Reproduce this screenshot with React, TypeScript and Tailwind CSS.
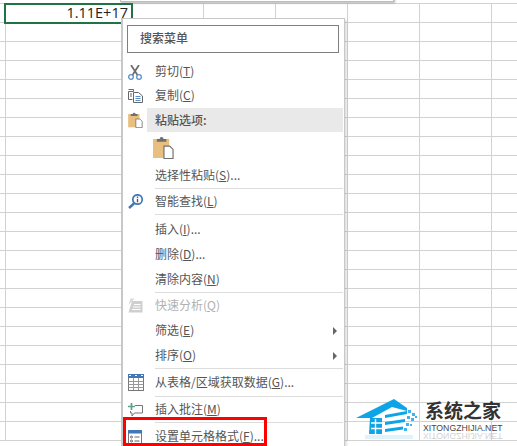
import React from 'react';

const CJK = "font-['Noto_Sans_CJK_SC','Noto_Sans',sans-serif]";

const rowCount = 23;
const colCount = 6;

const Sheet: React.FC = () => (
  <div className="pt-[3px]">
    <div className="border-t border-[#d2d2d2]">
      {Array.from({ length: rowCount }).map((_, r) => (
        <div key={r} className="flex h-[19px] border-b border-[#d2d2d2] box-border">
          <div className="w-[6px] shrink-0 border-r border-[#d2d2d2]" />
          <div className="w-[126px] shrink-0 border-r border-[#d2d2d2]" />
          {Array.from({ length: colCount }).map((_, c) => (
            <div key={c} className="w-[72px] shrink-0 border-r border-[#d2d2d2]" />
          ))}
        </div>
      ))}
    </div>
  </div>
);

const Clipboard: React.FC<{ className?: string }> = ({ className }) => (
  <svg viewBox="0 0 22 24" className={className}>
    <rect x="0" y="3" width="17" height="20" fill="#e9bf7f" />
    <path d="M4 6V3h3a2 2 0 0 1 4 0h3v3z" fill="#6f6f6f" />
    <path d="M11.500 10.500h6l3.500 3.500v9.500h-9.500z" fill="#fff" stroke="#6f6f6f" strokeWidth="1.200" />
  </svg>
);

const ScissorsIcon = () => (
  <svg viewBox="0 0 14 15" className="w-[14px] h-[15px]">
    <path d="M3 0l6.500 10M11 0L4.500 10" stroke="#6b6b6b" strokeWidth="1.700" fill="none" />
    <circle cx="3" cy="12" r="2.300" fill="none" stroke="#5b8fc7" strokeWidth="1.300" />
    <circle cx="11" cy="12" r="2.300" fill="none" stroke="#5b8fc7" strokeWidth="1.300" />
  </svg>
);

const CopyIcon = () => (
  <svg viewBox="0 0 15 14" className="w-[15px] h-[14px]" fill="none" stroke="#666" strokeWidth="1">
    <path d="M0.500 0.500h5v2M5.500 2.500h-5v8h4" />
    <path d="M5.500 3.500h5l4 3.500v6.500h-9z" fill="#fff" />
    <path d="M7.500 7.500h5M7.500 9.500h5M7.500 11.500h5" stroke="#5b8fc7" />
    <path d="M2 5h2M2 7h2" />
  </svg>
);

const SearchInfoIcon = () => (
  <svg viewBox="0 0 15 15" className="w-[15px] h-[15px]">
    <circle cx="9.500" cy="5.500" r="4.700" fill="#fff" stroke="#3f78b5" strokeWidth="1.700" />
    <path d="M6 9.500l-5 4.500" stroke="#3f78b5" strokeWidth="2.400" />
    <rect x="8.800" y="2.500" width="1.400" height="1.400" fill="#555" />
    <rect x="8.800" y="4.800" width="1.400" height="3.500" fill="#555" />
  </svg>
);

const QuickIcon = () => (
  <svg viewBox="0 0 15 15" className="w-[15px] h-[15px]">
    <path d="M4 3h10.500v11.500H0.500z" fill="#cfcfcf" />
    <path d="M6 6.500h6.500M5 9h7.500M4 11.500h8.500" stroke="#fff" strokeWidth="1.200" />
    <path d="M2.500 0.500h4L0.500 7z" fill="#d9d9d9" />
  </svg>
);

const TableIcon = () => (
  <svg viewBox="0 0 16 17" className="w-[16px] h-[17px]">
    <rect x="0.500" y="0.500" width="15" height="16" fill="#fff" stroke="#777" />
    <rect x="0" y="0" width="16" height="4" fill="#3f78b5" />
    <path d="M1 1.500h2M7 1.500h2M13 1.500h2" stroke="#fff" />
    <path d="M0.500 7.500h15M0.500 10.500h15M0.500 13.500h15M5.500 4v12M10.500 4v12" stroke="#999" />
  </svg>
);

const CommentIcon = () => (
  <svg viewBox="0 0 15 14" className="w-[15px] h-[14px]" fill="none">
    <path d="M7 2.500h7.500v7.500h-8l-2.500 3v-3H2.500V8" stroke="#777" />
    <path d="M3.500 0v7M0 3.500h7" stroke="#5fa08a" strokeWidth="1.700" />
  </svg>
);

const FormatIcon = () => (
  <svg viewBox="0 0 14 15" className="w-[14px] h-[15px]">
    <rect x="0.500" y="0.500" width="13" height="14" fill="#fff" stroke="#777" />
    <rect x="0" y="0" width="14" height="3.500" fill="#3f78b5" />
    <circle cx="3.500" cy="7" r="1" fill="none" stroke="#666" />
    <circle cx="3.500" cy="11" r="1" fill="none" stroke="#666" />
    <path d="M6.500 7h5M6.500 11h5" stroke="#666" />
  </svg>
);

type Item = {
  label: string;
  key?: string;
  tail?: string;
  icon?: React.ReactNode;
  h?: string;
  disabled?: boolean;
  arrow?: boolean;
};

const MenuRow: React.FC<{ item: Item }> = ({ item }) => (
  <div className={`flex items-center ${item.h ?? 'h-[25px]'}`}>
    <div className="w-[32px] shrink-0 flex pl-[5px]">{item.icon}</div>
    <div className={`flex-1 mb-[2px] text-[12px] leading-none whitespace-nowrap ${item.disabled ? 'text-[#b1b1b1]' : 'text-[#555]'}`}>
      {item.label}
      {item.key && (
        <>
          (<span className="underline">{item.key}</span>)
        </>
      )}
      {item.tail}
    </div>
    {item.arrow && <div className="mr-[7px] w-0 h-0 border-y-[4px] border-y-transparent border-l-[4px] border-l-[#666]" />}
  </div>
);

const Sep = () => <div className="ml-[32px] mr-[1px] h-[1px] bg-[#dcdcdc]" />;

const Menu: React.FC = () => (
  <div className={`absolute left-[121px] top-[18px] w-[224px] h-[440px] bg-white border-l-2 border-t border-r border-[#c8c8c8] shadow-[2px_2px_2px_rgba(0,0,0,0.12)] ${CJK}`}>
    <div className="ml-[4px] mr-[5px] mt-[6px] h-[28px] pb-[2px] border border-[#7f7f7f] flex items-center pl-[12px] text-[12px] font-medium text-[#555]">
      搜索菜单
    </div>
    <div className="mt-[7px]">
      <MenuRow item={{ label: '剪切', key: 'T', icon: <ScissorsIcon />, h: 'h-[24px]' }} />
      <MenuRow item={{ label: '复制', key: 'C', icon: <CopyIcon />, h: 'h-[24px]' }} />
      <div className="flex items-center h-[24px]">
        <div className="w-[24px] shrink-0 flex pl-[5px]"><Clipboard className="w-[15px] h-[16px]" /></div>
        <div className="flex-1 mr-[1px] h-full bg-[#e9e9e9] flex items-center pl-[8px] pb-[1px] text-[12px] font-medium text-[#555] leading-none">粘贴选项:</div>
      </div>
      <div className="h-[31px] pl-[30px] pt-[4px]"><Clipboard className="w-[21px] h-[23px]" /></div>
      <MenuRow item={{ label: '选择性粘贴', key: 'S', tail: '...' }} />
      <Sep />
      <MenuRow item={{ label: '智能查找', key: 'L', icon: <SearchInfoIcon /> }} />
      <Sep />
      <div className="pt-[2px]">
        <MenuRow item={{ label: '插入', key: 'I', tail: '...' }} />
      </div>
      <MenuRow item={{ label: '删除', key: 'D', tail: '...' }} />
      <MenuRow item={{ label: '清除内容', key: 'N' }} />
      <Sep />
      <MenuRow item={{ label: '快速分析', key: 'Q', icon: <QuickIcon />, disabled: true }} />
      <MenuRow item={{ label: '筛选', key: 'E', arrow: true }} />
      <MenuRow item={{ label: '排序', key: 'O', arrow: true }} />
      <Sep />
      <MenuRow item={{ label: '从表格/区域获取数据', key: 'G', tail: '...', icon: <TableIcon />, h: 'h-[27px]' }} />
      <Sep />
      <MenuRow item={{ label: '插入批注', key: 'M', icon: <CommentIcon /> }} />
      <Sep />
      <MenuRow item={{ label: '设置单元格格式', key: 'F', tail: '...', icon: <FormatIcon />, h: 'h-[28px]' }} />
    </div>
  </div>
);

const HouseLogo = () => (
  <svg viewBox="0 0 62 42" className="w-[62px] h-[42px]">
    <path d="M0 20L38 1l13 9v3L36 9 16 20z" fill="#0ea5e6" />
    <path d="M14 20h12v16H13z" fill="#0ea5e6" />
    <path d="M15 25h11M15 30.500h11" stroke="#fff" strokeWidth="1.600" />
    <path d="M19.500 21v15" stroke="#fff" strokeWidth="1.400" />
    <path d="M29 17l22-4v3l-22 4zM29 24l20-3v3l-20 3zM29 31l18-2.500v3L29 34z" fill="#0ea5e6" />
    <path d="M52 12h3v3h-3zM56 15h3v3h-3zM51 18h3v3h-3zM55 20h3v3h-3zM59 18h2v2h-2zM50 25h3v3h-3zM54 26h2v2h-2zM48 30h3v3h-3z" fill="#3fb4ea" />
    <rect x="9" y="37" width="48" height="4" fill="#0ea5e6" opacity="0.13" />
  </svg>
);

const Watermark: React.FC = () => (
  <div className="absolute left-[356px] top-[398px] flex">
    <HouseLogo />
    <div className="ml-[7px] mt-[3px]">
      <div className={`text-[19px] leading-[18px] font-bold text-[#333] whitespace-nowrap ${CJK}`}>系统之家</div>
      <div className="mt-[6px] -ml-[2px] text-[8.700px] leading-[7px] text-[#444] font-['Liberation_Sans',sans-serif] whitespace-nowrap">XITONGZHIJIA.NET</div>
      <div className="-ml-[2px] text-[8.700px] leading-[7px] text-[#444] opacity-25 -scale-y-100 font-['Liberation_Sans',sans-serif] whitespace-nowrap">XITONGZHIJIA.NET</div>
    </div>
  </div>
);

export default function App() {
  return (
    <div className="relative w-[517px] h-[446px] overflow-hidden bg-white">
      <Sheet />
      {/* dialog edge peeking in at the top */}
      <div className="absolute left-[120px] top-[-10px] w-[274px] h-[12px] bg-white border border-[#bdbdbd] shadow-[1px_1px_2px_rgba(0,0,0,0.3)]" />
      {/* selected cell */}
      <div className="absolute left-[4px] top-[3px] w-[129px] h-[21px] border-2 border-[#217346] bg-white flex items-center justify-end pr-[3px] text-[14.500px] leading-none text-[#222] font-['Open_Sans',sans-serif]">
        1.11E+17
      </div>
      <Menu />
      {/* red highlight */}
      <div className="absolute left-[123px] top-[417px] w-[144px] h-[29px] border-[3px] border-[#ff0000]" />
      <Watermark />
    </div>
  );
}
